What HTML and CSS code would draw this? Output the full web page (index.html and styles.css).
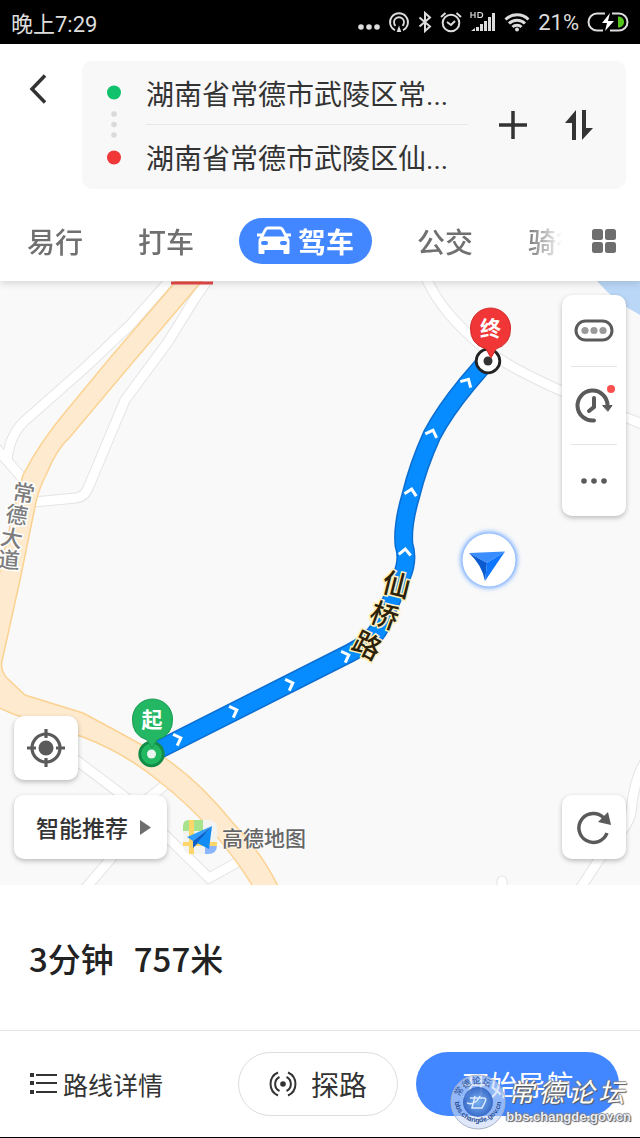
FILE: index.html
```html
<!DOCTYPE html>
<html lang="zh-CN">
<head>
    <meta charset="UTF-8">
    <meta name="viewport" content="width=device-width, initial-scale=1.0">
    <title>驾车路线</title>
    <link rel="stylesheet" href="styles.css">
</head>
<body>
    <div class="status-bar">
        <span class="clock">晚上7:29</span>
        <div class="status-icons">
            <svg width="22" height="24" viewBox="0 0 22 24" fill="#ddd"><circle cx="3" cy="17" r="2.8"/><circle cx="11" cy="17" r="2.8"/><circle cx="19" cy="17" r="2.8"/></svg>
            <svg width="22" height="24" viewBox="0 0 22 24" fill="none" stroke="#ddd" stroke-width="1.8"><path d="M7 20.3a9 9 0 1 1 8 0M7.5 15.8a5 5 0 1 1 7 0"/><path d="M11 15.5l2.3 6.5H8.700z" fill="#ddd" stroke="none"/></svg>
            <svg width="14" height="24" viewBox="0 0 14 24" fill="none" stroke="#ddd" stroke-width="2"><path d="M1.500 7.500l10.500 9-5 4.500V3l5 4.500-10.500 9"/></svg>
            <svg width="22" height="24" viewBox="0 0 22 24" fill="none" stroke="#ddd" stroke-width="2"><circle cx="11" cy="13" r="8.300"/><path d="M1 7l4.500-4M21 7l-4.500-4M7 12l4 3 4-4"/></svg>
            <svg width="26" height="24" viewBox="0 0 26 24" fill="#ddd"><path d="M1 21l4-3v3zM6 17h3v4H6zM10 14h3v7h-3zM14 11h3v10h-3zM18 7h3v14h-3zM22 3h3v18h-3z"/><path d="M1 2v6M5 2v6M1 5h4M8 2.500v5h2c3.500 0 3.500-5 0-5z" fill="none" stroke="#ddd" stroke-width="1.200"/></svg>
            <svg width="26" height="24" viewBox="0 0 26 24" fill="none" stroke="#ddd" stroke-width="3"><path d="M1.500 9.500a16.500 16.500 0 0 1 23 0M5 13.500a11.500 11.500 0 0 1 16 0M8.500 17a6.500 6.500 0 0 1 9 0"/><circle cx="13" cy="19.500" r="2" fill="#ddd" stroke="none"/></svg>
            <span class="percent">21%</span>
            <svg width="42" height="24" viewBox="0 0 42 24"><path d="M18 3.500h-8a8.500 8.500 0 0 0 0 17h6M25 3.500h7a8.500 8.500 0 0 1 0 17h-9" fill="none" stroke="#ddd" stroke-width="2"/><path d="M23 3l-8 10h5l-2 8 9-10h-6z" fill="#fff"/><path d="M31 6.500c8 0 8 11 0 11z" fill="#52c41a"/></svg>
        </div>
    </div>

    <header class="header">
        <div class="search">
            <button class="icon-btn back" aria-label="返回">
                <svg width="18" height="32" viewBox="0 0 18 32" fill="none" stroke="#333" stroke-width="3.500"><path d="M16 2.500L3 16l13 13.500"/></svg>
            </button>
            <div class="places">
                <svg class="place-dots" width="16" height="80" viewBox="0 0 16 80"><circle cx="8" cy="7.500" r="7" fill="#10c26b"/><g fill="#dadada"><circle cx="8" cy="29" r="2.800"/><circle cx="8" cy="39.500" r="2.800"/><circle cx="8" cy="50" r="2.800"/></g><circle cx="8" cy="72.500" r="7" fill="#f03838"/></svg>
                <div class="place-fields">
                    <input type="text" aria-label="起点" value="湖南省常德市武陵区常...">
                    <input type="text" aria-label="终点" value="湖南省常德市武陵区仙...">
                </div>
                <button class="icon-btn" aria-label="添加途经点">
                    <svg width="30" height="30" viewBox="0 0 30 30" stroke="#333" stroke-width="3.500"><path d="M1 15h28M15 1v28"/></svg>
                </button>
                <button class="icon-btn swap" aria-label="交换起终点">
                    <svg width="30" height="30" viewBox="0 0 30 30" fill="#333"><path d="M12 0v30H8V13H1zM18 0h4v18h7L18 30z"/></svg>
                </button>
            </div>
        </div>
        <nav class="tabs">
            <div class="tab-list">
                <a href="#" class="tab">易行</a>
                <a href="#" class="tab">打车</a>
                <a href="#" class="tab active">
                    <svg width="34" height="28" viewBox="0 0 34 28"><path d="M4 11L8.500 2.500Q9.500 1 11 1h12q1.500 0 2.500 1.500L30 11" fill="none" stroke="#fff" stroke-width="2.800"/><path d="M0 6.500h5v3H0zM29 6.500h5v3h-5zM5 9.500h24q3.500 1 3.500 4V26q0 1-1 1h-4q-1 0-1-1v-3h-19v3q0 1-1 1h-4q-1 0-1-1V13.500q0-3 3.500-4z" fill="#fff"/><rect x="4" y="14" width="7" height="4" rx="2" fill="#4287ff"/><rect x="23" y="14" width="7" height="4" rx="2" fill="#4287ff"/></svg>
                    驾车
                </a>
                <a href="#" class="tab">公交</a>
                <a href="#" class="tab">骑行</a>
            </div>
            <button class="icon-btn" aria-label="全部">
                <svg width="24" height="24" viewBox="0 0 24 24" fill="#6e6e6e"><rect width="11" height="11" rx="2.500"/><rect x="13" width="11" height="11" rx="2.500"/><rect y="13" width="11" height="11" rx="2.500"/><rect x="13" y="13" width="11" height="11" rx="2.500"/></svg>
            </button>
        </nav>
    </header>

    <main class="map">
        <svg class="map-canvas" viewBox="0 281 640 604" preserveAspectRatio="xMidYMid slice">
            <defs>
                <path id="lanes" d="M170 280L130 325 88 365 28 418Q10 432 7 460M-4 448L24 480M209 278L194 300 168 342 125 400 89 486Q85 497 76 498L34 502M426 278C440 308 458 325 480 345C510 370 565 394 645 425M76 760L125 797 167 837 209 878 238 862M165 785L146 800M114 855L84 890M578 892L604 852Q630 825 631 812Q634 780 645 762M502 890V881"/>
                <path id="route" d="M485 363L467 384Q444 412 432 435Q418 466 411 495Q402 525 404 545Q409 560 401 578L380 627Q373 641 350 653L156 751"/>
                <path id="chevron" d="M-3 -6L3 0L-3 6"/>
                <filter id="glow" x="-50%" y="-50%" width="200%" height="200%"><feGaussianBlur stdDeviation="2.500"/></filter>
            </defs>
            <path d="M597 281h43v34Q615 302 597 281z" fill="#bbd7f7"/>
            <use href="#lanes" fill="none" stroke="#e4e4e4" stroke-width="11" stroke-linecap="round"/>
            <use href="#lanes" fill="none" stroke="#fff" stroke-width="9" stroke-linecap="round"/>
            <path d="M176 281L110 358 67 410Q40 442 23 475Q8 530 -5 595V706L13 714 83 737Q125 753 160 782Q215 825 254 888H279Q260 850 233 823Q200 782 165 758Q130 738 83 713L25 695 7 678Q0 670 2 661L20 580 35 507Q38 490 47 473Q56 450 70 437L128 368 202 281z" fill="#feebcf" stroke="#fbd292" stroke-width="1.500"/>
            <path d="M171 281.500h42v3h-42z" fill="#e84a4a"/>
            <g class="road-name">
                <text transform="translate(24 491) rotate(10)">常</text>
                <text transform="translate(17 513) rotate(10)">德</text>
                <text transform="translate(12 536) rotate(10)">大</text>
                <text transform="translate(9 558) rotate(5)">道</text>
            </g>
            <use href="#route" fill="none" stroke="#0b6ed0" stroke-width="19"/>
            <use href="#route" fill="none" stroke="#068cff" stroke-width="16"/>
            <g fill="none" stroke="#fff" stroke-width="3">
                <use href="#chevron" transform="translate(467 382) rotate(-60)"/>
                <use href="#chevron" transform="translate(432 433) rotate(-70)"/>
                <use href="#chevron" transform="translate(411 492) rotate(-78)"/>
                <use href="#chevron" transform="translate(405 552) rotate(-85)"/>
                <use href="#chevron" transform="translate(346 656) rotate(-20)"/>
                <use href="#chevron" transform="translate(290 684) rotate(-20)"/>
                <use href="#chevron" transform="translate(234 711) rotate(-20)"/>
                <use href="#chevron" transform="translate(178 739) rotate(-20)"/>
            </g>
            <g class="route-name">
                <text transform="translate(397 583) rotate(14)">仙</text>
                <text transform="translate(385 614) rotate(20)">桥</text>
                <text transform="translate(368 644) rotate(27)">路</text>
            </g>
            <circle cx="488" cy="361" r="11.800" fill="#fff" stroke="#222" stroke-width="2.800"/>
            <circle cx="488" cy="361" r="4.500" fill="#333"/>
            <path d="M491 358L486 349Q470 344 470.500 328a20 20 0 0 1 40 0Q511 344 496 349z" fill="#f03636" stroke="#d22b2b"/>
            <text class="pin-text" x="490.500" y="327">终</text>
            <circle cx="151.500" cy="754" r="11.800" fill="#22b862" stroke="#138c48" stroke-width="2.800"/>
            <path d="M152 748L147 740Q132 735 132.500 719a20 20 0 0 1 40 0Q173 735 157 740z" fill="#24b763" stroke="#189a51"/>
            <circle cx="151.500" cy="754" r="4.500" fill="#e9f5ee"/>
            <text class="pin-text" x="152" y="718">起</text>
            <circle cx="489" cy="560" r="28" fill="#5d9dff" filter="url(#glow)"/>
            <circle cx="489" cy="560" r="26.500" fill="#fff"/>
            <path d="M469 553L505 551.500 487 563z" fill="#3a8eff"/>
            <path d="M469 553L487 563 485 581Q482 565 469 553z" fill="#0b5ad0"/>
            <path d="M505 551.500L487 563 485 581z" fill="#0f76ff"/>
        </svg>

        <div class="panel tools">
            <button aria-label="限行">
                <svg width="40" height="24" viewBox="0 0 40 24"><rect x="2" y="2" width="36" height="19" rx="9.500" fill="none" stroke="#5a5a5a" stroke-width="3"/><g fill="#9a9a9a"><circle cx="11" cy="11.500" r="3.600"/><circle cx="20" cy="11.500" r="3.600"/><circle cx="29" cy="11.500" r="3.600"/></g></svg>
            </button>
            <button aria-label="出发时间">
                <svg width="40" height="40" viewBox="0 0 40 40" fill="none" stroke="#5a5a5a" stroke-width="4" stroke-linecap="round"><path d="M20 34.500a15 15 0 1 1 13.500-15.500M20 12v9l-5 4"/><path d="M29 19.500h9L34 25z" fill="#5a5a5a" stroke-width="1"/><circle cx="37" cy="3" r="4" fill="#ff5050" stroke="none"/></svg>
            </button>
            <button aria-label="更多">
                <svg width="26" height="6" viewBox="0 0 26 6" fill="#5a5a5a"><circle cx="3" cy="3" r="2.800"/><circle cx="13" cy="3" r="2.800"/><circle cx="23" cy="3" r="2.800"/></svg>
            </button>
        </div>

        <div class="map-footer">
            <div class="left">
                <button class="panel square" aria-label="定位">
                    <svg width="38" height="38" viewBox="0 0 38 38" fill="none" stroke="#5a5a5a" stroke-width="3.200"><circle cx="19" cy="19" r="14"/><circle cx="19" cy="19" r="7.500" fill="#5a5a5a" stroke="none"/><path d="M19 0v9M19 29v9M0 19h9M29 19h9"/></svg>
                </button>
                <div class="row">
                    <button class="panel prefer">智能推荐
                        <svg width="11" height="15" viewBox="0 0 11 15" fill="#6e6e6e"><path d="M0 0l11 7.500L0 15z"/></svg>
                    </button>
                    <div class="brand">
                        <svg width="34" height="34" viewBox="0 0 34 34"><rect width="34" height="34" rx="8" fill="#f3f3f1"/><path d="M6 0h14v11H0V6q0-6 6-6z" fill="#a6e38c"/><path d="M22 25h12q0 9-9 9h-3z" fill="#8ab4fb"/><path d="M6 0h5v34H6zM0 22h34v4H0z" fill="#fdd66b"/><path d="M29 6L4 17l6 4z" fill="#2f9cff"/><path d="M29 6L10 21v7l5-5z" fill="#0b61c9"/><path d="M29 6L14 23l12 6z" fill="#128cf5"/></svg>
                        高德地图
                    </div>
                </div>
            </div>
            <button class="panel square" aria-label="刷新">
                <svg width="34" height="34" viewBox="0 0 34 34"><path d="M30 23a14.500 14.500 0 1 1-3-15" fill="none" stroke="#5a5a5a" stroke-width="3.500"/><path d="M31 2l3 13-13-3z" fill="#5a5a5a"/></svg>
            </button>
        </div>
    </main>

    <section class="summary">
        <span>3分钟</span>
        <span>757米</span>
    </section>

    <footer class="actions">
        <a href="#" class="details">
            <svg width="27" height="22" viewBox="0 0 27 22" fill="#333"><path d="M0 0h4v4H0zM0 8h4v4H0zM0 17h4v4H0zM6 1h21v2H6zM6 9h21v2H6zM6 18h21v2H6z"/></svg>
            路线详情
        </a>
        <button class="pill">
            <svg width="28" height="28" viewBox="0 0 28 28" fill="none" stroke="#333" stroke-width="2"><circle cx="14" cy="14" r="2.800" fill="#333" stroke="none"/><path d="M9 2.500a12.600 12.600 0 0 0 0 23M19 2.500a12.600 12.600 0 0 1 0 23M10.500 7a7.800 7.800 0 0 0 0 14M17.500 7a7.800 7.800 0 0 1 0 14"/></svg>
            探路
        </button>
        <button class="pill primary">开始导航</button>
        <div class="watermark">
            <svg width="56" height="56" viewBox="0 0 56 56">
                <defs>
                    <path id="arc-top" d="M9 31a19 19 0 0 1 38 -4"/>
                    <path id="arc-bottom" d="M4.500 25a23.500 23.500 0 1 0 47 0"/>
                    <radialGradient id="orb"><stop offset="0" stop-color="#74b0ee"/><stop offset="1" stop-color="#2358bd"/></radialGradient>
                </defs>
                <circle cx="28" cy="28" r="27" fill="#c9d9f7" fill-opacity=".6" stroke="#a9b3c8"/>
                <circle cx="28" cy="28" r="15" fill="url(#orb)" fill-opacity=".8"/>
                <path d="M17 29q8 3 13-7M20 24h14q3 0 1 4l-3 6H22l3-12" fill="none" stroke="#dcebff" stroke-width="1.500"/>
                <text class="seal-name"><textPath href="#arc-top" startOffset="8">常德论坛</textPath></text>
                <text class="seal-url"><textPath href="#arc-bottom" startOffset="3">bbs.changde.gov.cn</textPath></text>
            </svg>
            <div class="watermark-text">
                <span class="site-name"><span>常</span><span>德</span><span>论</span><span>坛</span></span>
                <span class="site-url">bbs.changde.gov.cn</span>
            </div>
        </div>
    </footer>
</body>
</html>
```

FILE: styles.css
```css
* { box-sizing: border-box; }
body { display: flex; flex-direction: column; min-height: 100vh; margin: 0; border-bottom: 1px solid #000; background: #fff; color: #333; font-family: Roboto, "Noto Sans CJK SC", sans-serif; }
button, input { font: inherit; color: inherit; }
button { padding: 0; border: none; background: none; cursor: pointer; }
a { color: inherit; text-decoration: none; }
svg { display: block; flex: none; overflow: visible; }

.status-bar { display: flex; align-items: center; justify-content: space-between; height: 44px; padding: 0 11px; background: #000; color: #ddd; font-size: 22px; }
.status-icons { display: flex; align-items: center; gap: 8px; }

.header { position: relative; z-index: 1; padding: 17px 14px 17px 0; background: #fff; box-shadow: 0 2px 8px rgba(0,0,0,0.15); }
.search { display: flex; align-items: flex-start; }
.icon-btn { display: flex; align-items: center; justify-content: center; }
.back { width: 82px; height: 56px; padding-right: 6px; }
.places { display: flex; flex: 1; align-items: center; min-width: 0; padding: 0 32px 0 24px; border-radius: 10px; background: #f8f8f8; }
.place-fields { flex: 1; min-width: 0; margin: 0 30px 0 24px; }
.place-fields input { display: block; width: 100%; height: 64px; padding: 0; border: none; outline: none; background: none; font-size: 28px; }
.place-fields input:first-child { border-bottom: 1px solid #e8e8e8; }
.swap { margin-left: 36px; }

.tabs { display: flex; align-items: center; justify-content: space-between; padding: 0 10px 0 27px; margin-top: 29px; }
.tab-list { display: flex; flex: 1; align-items: center; gap: 55px; overflow: hidden; margin-right: 30px; -webkit-mask-image: linear-gradient(to right, #000 calc(100% - 36px), transparent); mask-image: linear-gradient(to right, #000 calc(100% - 36px), transparent); }
.tab { flex: none; color: #707070; font-size: 28px; line-height: 46px; font-weight: 500; font-family: "Noto Sans CJK SC", sans-serif; }
.tab.active { display: flex; align-items: center; gap: 7px; margin: 0 -10px; padding: 0 18px; border-radius: 23px; background: #4287ff; color: #fff; font-weight: 700; }

.map { position: relative; display: flex; flex: 1; flex-direction: column; align-items: flex-end; justify-content: space-between; min-height: 600px; padding: 14px 14px 26px; background: #f9f9f9; overflow: hidden; }
.map-canvas { position: absolute; inset: 0; width: 100%; height: 100%; }
.map text { text-anchor: middle; dominant-baseline: central; font-family: "Noto Sans CJK SC", sans-serif; paint-order: stroke; }
.road-name { fill: #7d7d7d; stroke: #fff; stroke-width: 3px; font-size: 22px; font-weight: 500; }
.route-name { fill: #2c2208; stroke: #fff0bd; stroke-width: 3px; font-size: 28px; font-weight: 500; }
.pin-text { fill: #fff; font-size: 21px; font-weight: 700; }

.panel { position: relative; border-radius: 10px; background: #fff; box-shadow: 0 2px 5px rgba(0,0,0,0.25); }
.tools { display: flex; flex-direction: column; width: 64px; padding: 0 9px; }
.tools button { display: flex; align-items: center; justify-content: center; height: 71px; }
.tools button:nth-child(2) { height: 79px; border: solid #e4e4e4; border-width: 1px 0; }
.map-footer { display: flex; align-items: flex-end; justify-content: space-between; width: 100%; }
.square { display: flex; align-items: center; justify-content: center; width: 64px; height: 64px; }
.row { display: flex; align-items: center; gap: 16px; margin-top: 15px; }
.prefer { display: flex; align-items: center; gap: 12px; height: 64px; padding: 0 16px 0 22px; font-size: 23px; font-weight: 500; }
.brand { position: relative; display: flex; align-items: center; gap: 5px; padding-top: 20px; color: #666; font-size: 21px; font-weight: 500; text-shadow: 0 0 2px #fff, 0 0 2px #fff; }

.summary { display: flex; align-items: center; gap: 20px; height: 145px; padding: 0 29px; color: #222; font-size: 33px; font-weight: 500; font-family: "Noto Sans CJK SC", sans-serif; }

.actions { position: relative; display: flex; align-items: center; gap: 18px; padding: 21px; border-top: 1px solid #e4e4e4; }
.details { display: flex; flex: 1; align-items: center; gap: 6px; padding-left: 9px; font-size: 25px; }
.pill { display: flex; align-items: center; justify-content: center; gap: 14px; min-width: 160px; height: 64px; border: 1px solid #ddd; border-radius: 32px; font-size: 28px; }
.primary { min-width: 203px; border: none; background: #4287ff; color: #fff; }

.watermark { position: absolute; right: 9px; bottom: 7px; display: flex; align-items: center; pointer-events: none; }
.watermark-text { display: flex; flex-direction: column; color: #fff; text-shadow: 1px 1px 1px #555, -1px 0 1px #777, 0 -1px 1px #888; }
.site-name { display: flex; gap: 4px; padding-left: 2px; font-size: 26px; line-height: 30px; font-style: italic; }
.site-url { color: #e8eefa; font-family: "Liberation Sans", sans-serif; font-size: 13px; line-height: 18px; font-weight: 700; }
.seal-name { fill: #2b4f94; font-family: "Noto Sans CJK SC", sans-serif; font-size: 9px; }
.seal-url { fill: #2b4f94; font-family: "Liberation Sans", sans-serif; font-size: 7px; font-weight: 700; }
```
